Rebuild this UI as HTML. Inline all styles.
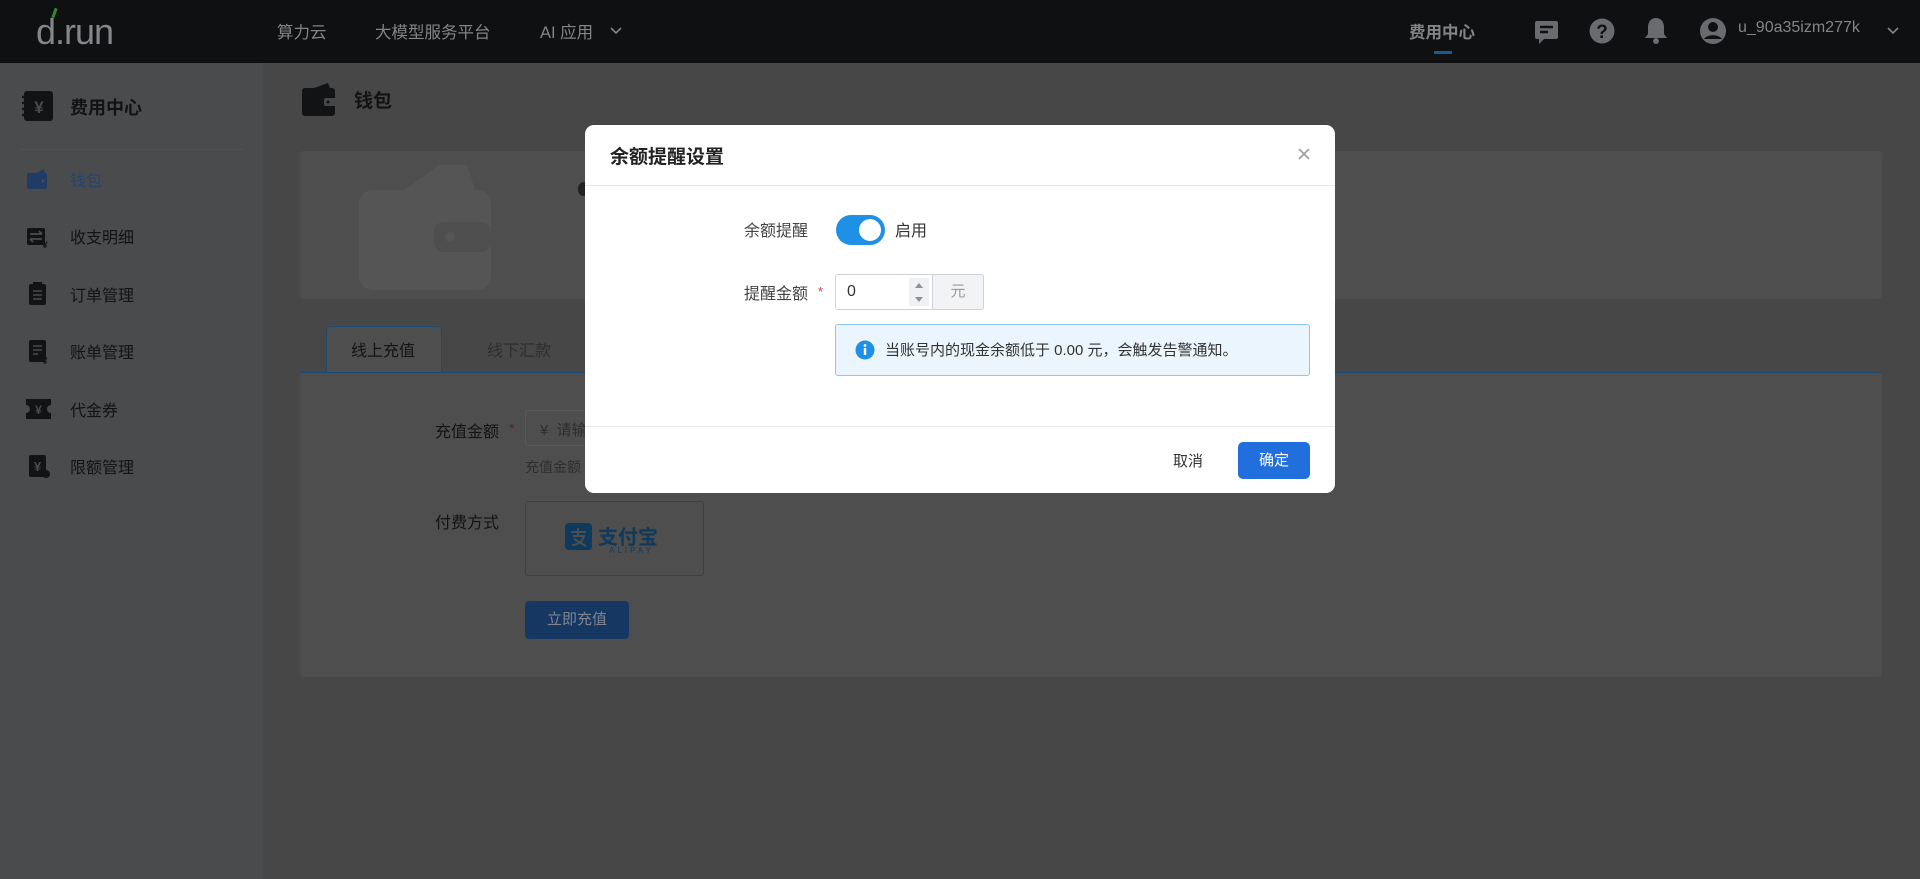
<!DOCTYPE html>
<html><head><meta charset="utf-8">
<style>
*{box-sizing:border-box;margin:0;padding:0}
body{width:1920px;height:879px;overflow:hidden;background:#474747;font-family:"Liberation Sans","Noto Sans CJK SC",sans-serif;position:relative}
.a{position:absolute}
.hdr{left:0;top:0;width:1920px;height:63px;background:#0f1012}
.nav{color:#838487;font-size:16.5px;top:19px}
.side{left:0;top:63px;width:263px;height:816px;background:#4a4b4d}
.mi{left:70px;font-size:16px;color:#121314}
.card{background:#4e4e4e;border-radius:4px}
</style></head><body>
<div class="a hdr"></div>
<div class="a" style="left:36px;top:11px;font-size:36px;color:#85868a;letter-spacing:-1px">d.run</div>
<div class="a" style="left:53px;top:8px;width:3px;height:10px;background:#2f8a2f;transform:rotate(20deg)"></div>
<div class="a nav" style="left:277px">算力云</div>
<div class="a nav" style="left:375px">大模型服务平台</div>
<div class="a nav" style="left:540px">AI 应用</div>
<svg class="a" style="left:609px;top:24px" width="14" height="14"><path d="M2 4l5 5 5-5" stroke="#838487" stroke-width="1.6" fill="none"/></svg>
<div class="a nav" style="left:1409px;font-weight:bold">费用中心</div>
<div class="a" style="left:1434px;top:51px;width:18px;height:3px;background:#1d5b8c"></div>
<svg class="a" style="left:1533px;top:18px" width="28" height="28"><path d="M4 3h19a2 2 0 0 1 2 2v14a2 2 0 0 1-2 2H11l-5 5v-5H4a2 2 0 0 1-2-2V5a2 2 0 0 1 2-2z" fill="#6a6b6e"/><path d="M7 9h13M7 14h8" stroke="#0f1012" stroke-width="2.5"/></svg>
<svg class="a" style="left:1588px;top:17px" width="28" height="28"><circle cx="14" cy="14" r="12.5" fill="#6a6b6e"/><text x="14" y="21" text-anchor="middle" font-size="19" font-weight="bold" fill="#0f1012" font-family="Liberation Sans">?</text></svg>
<svg class="a" style="left:1643px;top:16px" width="26" height="30"><path d="M13 2c-5 0-8 4-8 9v7l-3 4h22l-3-4v-7c0-5-3-9-8-9z" fill="#6a6b6e"/><circle cx="13" cy="25" r="3" fill="#6a6b6e"/></svg>
<svg class="a" style="left:1698px;top:16px" width="30" height="30"><circle cx="15" cy="15" r="13" fill="#6a6b6e"/><circle cx="15" cy="11" r="5" fill="#0f1012"/><path d="M6 23c3-5 15-5 18 0" fill="#0f1012"/></svg>
<div class="a nav" style="left:1738px;font-size:16px">u_90a35izm277k</div>
<svg class="a" style="left:1886px;top:24px" width="14" height="14"><path d="M2 4l5 5 5-5" stroke="#838487" stroke-width="1.6" fill="none"/></svg>

<div class="a side"></div>
<svg class="a" style="left:22px;top:91px" width="31" height="30"><rect x="2" y="0" width="29" height="30" rx="3" fill="#111315"/><path d="M0 6h4M0 12h4M0 18h4M0 24h4" stroke="#111315" stroke-width="2.5"/><text x="17" y="22" text-anchor="middle" font-size="17" font-weight="bold" fill="#4a4b4d" font-family="Liberation Sans">¥</text></svg>
<div class="a" style="left:70px;top:94px;font-size:18px;font-weight:bold;color:#121314">费用中心</div>
<div class="a" style="left:19px;top:149px;width:225px;height:1px;background:#505153"></div>
<svg class="a" style="left:27px;top:168px" width="22" height="22"><rect x="0" y="5" width="20" height="16" rx="2" fill="#203c66"/><path d="M9 5l8-4 1 4z" fill="#203c66"/><circle cx="16" cy="13" r="1.5" fill="#4a4b4d"/></svg>
<div class="a mi" style="top:167px;color:#25436e">钱包</div>
<svg class="a" style="left:27px;top:226px" width="22" height="22"><rect x="0" y="2" width="18" height="17" rx="2" fill="#111315"/><path d="M3 8h12M15 8l-3-3M15 13H3M3 13l3 3" stroke="#4a4b4d" stroke-width="1.8" fill="none"/><text x="18" y="22" text-anchor="middle" font-size="9" font-weight="bold" fill="#111315">¥</text></svg>
<div class="a mi" style="top:224px">收支明细</div>
<svg class="a" style="left:29px;top:282px" width="18" height="24"><rect x="0" y="2" width="17" height="21" rx="2" fill="#111315"/><rect x="4" y="0" width="9" height="4" fill="#111315"/><path d="M4 9h9M4 13h9M4 17h9" stroke="#4a4b4d" stroke-width="1.6"/></svg>
<div class="a mi" style="top:282px">订单管理</div>
<svg class="a" style="left:29px;top:340px" width="20" height="24"><rect x="0" y="0" width="17" height="22" rx="2" fill="#111315"/><path d="M4 6h9M4 10h9M4 14h5" stroke="#4a4b4d" stroke-width="1.6"/><text x="16" y="24" text-anchor="middle" font-size="9" font-weight="bold" fill="#111315">¥</text></svg>
<div class="a mi" style="top:339px">账单管理</div>
<svg class="a" style="left:26px;top:399px" width="25" height="20"><path d="M0 0h25v6a4 4 0 0 0 0 8v6H0v-6a4 4 0 0 0 0-8z" fill="#111315"/><text x="12.5" y="15" text-anchor="middle" font-size="12" font-weight="bold" fill="#4a4b4d">¥</text></svg>
<div class="a mi" style="top:397px">代金券</div>
<svg class="a" style="left:29px;top:455px" width="22" height="24"><rect x="0" y="0" width="17" height="22" rx="2" fill="#111315"/><text x="8.5" y="16" text-anchor="middle" font-size="13" font-weight="bold" fill="#4a4b4d">¥</text><circle cx="17" cy="19" r="4" fill="#111315"/></svg>
<div class="a mi" style="top:454px">限额管理</div>

<svg class="a" style="left:302px;top:83px" width="34" height="34"><rect x="0" y="5" width="33" height="28" rx="3" fill="#111315"/><path d="M12 5l14-5 2 5z" fill="#111315"/><rect x="22" y="15" width="12" height="8" rx="2" fill="#474747"/><circle cx="26" cy="19" r="1.5" fill="#111315"/></svg>
<div class="a" style="left:354px;top:86px;font-size:19px;font-weight:bold;color:#121314">钱包</div>

<div class="a card" style="left:300px;top:151px;width:1582px;height:148px"></div>
<svg class="a" style="left:359px;top:162px" width="132" height="130"><path d="M45 28L80 3l28 0 8 25z" fill="#555"/><rect x="0" y="28" width="132" height="100" rx="14" fill="#555"/><rect x="75" y="60" width="57" height="30" rx="10" fill="#4e4e4e"/><circle cx="91" cy="75" r="5" fill="#555"/></svg>
<div class="a" style="left:578px;top:182px;width:12px;height:14px;background:#222;border-radius:6px"></div>

<div class="a" style="left:326px;top:326px;width:116px;height:47px;background:#4e4e4e;border:1px solid #1d4a70;border-bottom:none;border-radius:4px 4px 0 0"></div>
<div class="a" style="left:351px;top:337px;font-size:16px;color:#121314">线上充值</div>
<div class="a" style="left:487px;top:337px;font-size:16px;color:#2e2e2e">线下汇款</div>
<div class="a" style="left:300px;top:372px;width:1582px;height:1px;background:#1d4a70"></div>
<div class="a card" style="left:300px;top:373px;width:1582px;height:304px;border-radius:0 0 4px 4px"></div>
<div class="a" style="left:435px;top:418px;font-size:16px;color:#121314">充值金额</div>
<div class="a" style="left:509px;top:420px;font-size:14px;color:#6e1818">*</div>
<div class="a" style="left:525px;top:410px;width:80px;height:36px;border:1px solid #595959;border-radius:3px;color:#2e2e2e;font-size:15px;padding:8px 14px">¥ &nbsp;请输</div>
<div class="a" style="left:525px;top:457px;font-size:14px;color:#2e2e2e">充值金额</div>
<div class="a" style="left:435px;top:509px;font-size:16px;color:#121314">付费方式</div>
<div class="a" style="left:525px;top:501px;width:179px;height:75px;border:1px solid #284660;border-radius:3px"></div>
<svg class="a" style="left:565px;top:523px" width="27" height="27"><rect width="27" height="27" rx="4" fill="#0f3a5e"/><path d="M6 9h15M13 5v8M8 13h11c-2 6-7 9-12 9M9 16c4 2 8 5 12 7" stroke="#4e4e4e" stroke-width="2" fill="none"/></svg>
<div class="a" style="left:598px;top:521px;font-size:20px;font-weight:bold;color:#0f3a5e">支付宝</div>
<div class="a" style="left:609px;top:546px;font-size:8px;color:#0f3a5e;letter-spacing:3px">ALIPAY</div>
<div class="a" style="left:525px;top:601px;width:104px;height:38px;background:#173763;border-radius:4px;color:#7f8590;font-size:15px;text-align:center;line-height:38px">立即充值</div>

<!-- modal -->
<div class="a" style="left:585px;top:125px;width:750px;height:368px;background:#fff;border-radius:9px"></div>
<div class="a" style="left:610px;top:142px;font-size:19px;font-weight:bold;color:#222">余额提醒设置</div>
<svg class="a" style="left:1296px;top:146px" width="16" height="16"><path d="M3 3l10 10M13 3L3 13" stroke="#9a9ca0" stroke-width="1.6"/></svg>
<div class="a" style="left:585px;top:185px;width:750px;height:1px;background:#e4e6ea"></div>
<div class="a" style="left:744px;top:217px;font-size:16px;color:#444">余额提醒</div>
<div class="a" style="left:836px;top:215px;width:49px;height:30px;background:#1e90e6;border-radius:15px"></div>
<div class="a" style="left:859px;top:219px;width:22px;height:22px;background:#fff;border-radius:50%"></div>
<div class="a" style="left:895px;top:217px;font-size:16px;color:#333">启用</div>
<div class="a" style="left:744px;top:280px;font-size:16px;color:#444">提醒金额</div>
<div class="a" style="left:818px;top:284px;font-size:13px;color:#e33">*</div>
<div class="a" style="left:835px;top:274px;width:98px;height:36px;border:1px solid #cfd3d9;border-radius:3px 0 0 3px;font-size:16px;color:#333;padding:8px 11px">0</div>
<div class="a" style="left:909px;top:278px;width:20px;height:28px;background:#f0f1f4"></div>
<svg class="a" style="left:913px;top:281px" width="12" height="24"><path d="M2 7l4-5 4 5z M2 16l4 5 4-5z" fill="#8d9096"/></svg>
<div class="a" style="left:932px;top:274px;width:52px;height:36px;border:1px solid #cfd3d9;background:#f2f3f5;border-radius:0 3px 3px 0;font-size:15px;color:#999;text-align:center;line-height:34px">元</div>
<div class="a" style="left:835px;top:324px;width:475px;height:52px;background:#ebf5fd;border:1px solid #8ec6ef;border-radius:3px"></div>
<svg class="a" style="left:855px;top:340px" width="20" height="20"><circle cx="10" cy="10" r="9.5" fill="#1e90e6"/><rect x="8.8" y="8" width="2.4" height="7" fill="#fff"/><circle cx="10" cy="5.5" r="1.4" fill="#fff"/></svg>
<div class="a" style="left:885px;top:339px;font-size:15px;color:#333">当账号内的现金余额低于 0.00 元，会触发告警通知。</div>
<div class="a" style="left:585px;top:426px;width:750px;height:1px;background:#e4e6ea"></div>
<div class="a" style="left:1173px;top:450px;font-size:15px;color:#333">取消</div>
<div class="a" style="left:1238px;top:442px;width:72px;height:37px;background:#216fdc;border-radius:5px;color:#fff;font-size:15px;text-align:center;line-height:37px">确定</div>
</body></html>
